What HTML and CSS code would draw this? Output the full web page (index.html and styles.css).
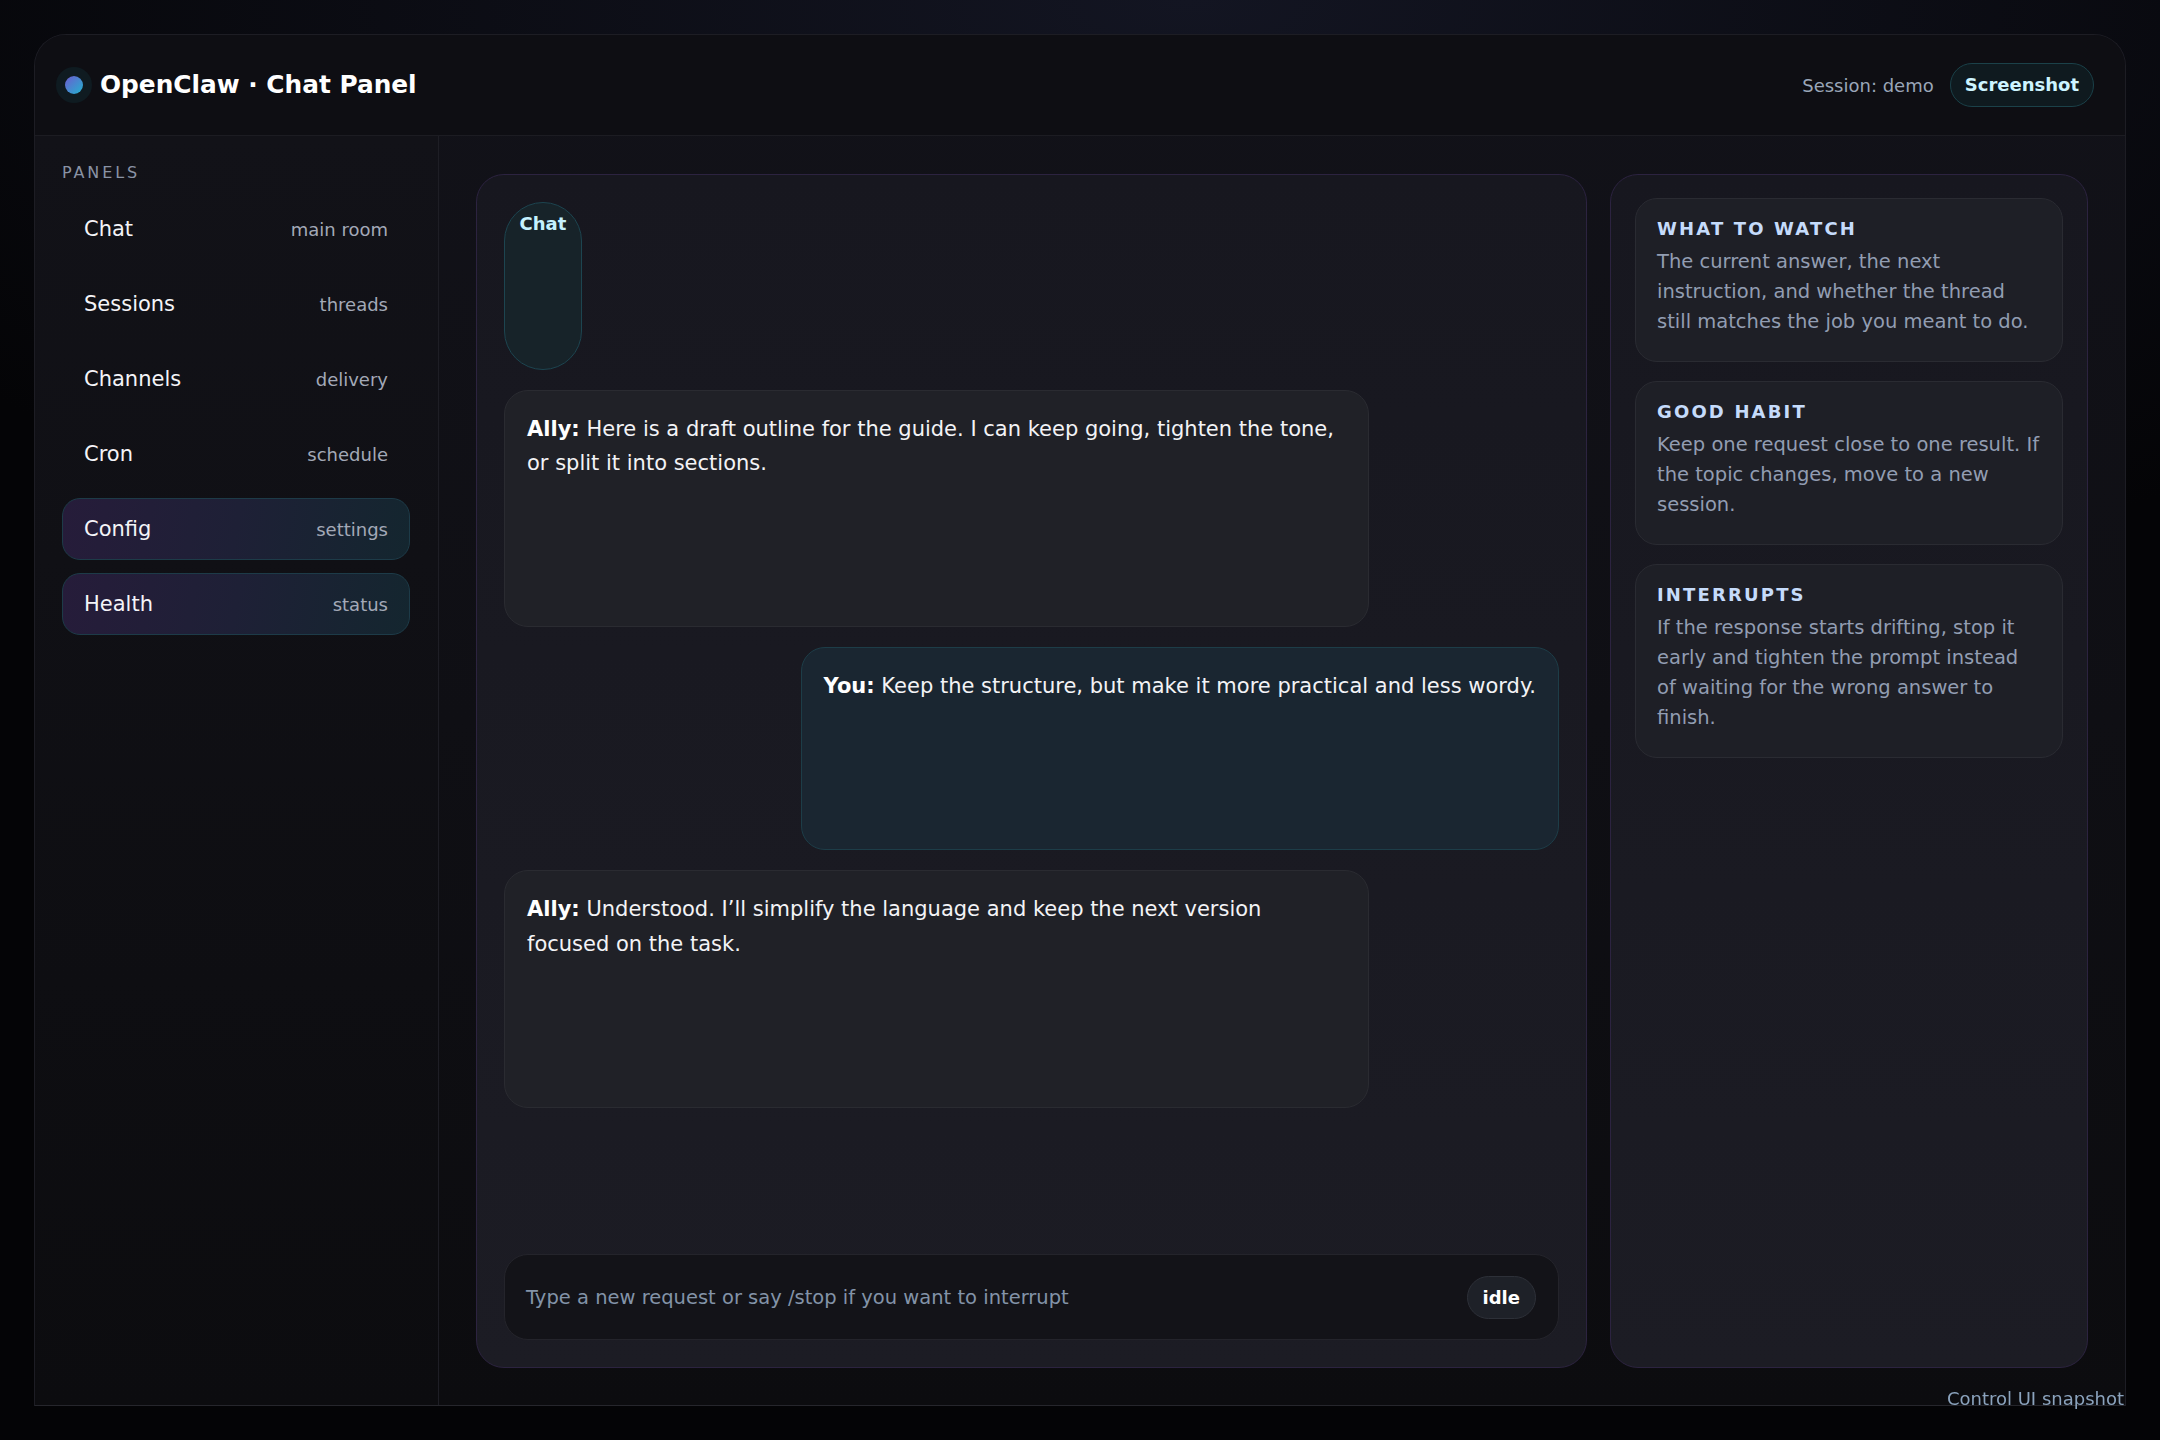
FILE: index.html
```html
<!DOCTYPE html>
<html lang="en">
<head>
<meta charset="utf-8">
<title>OpenClaw · Chat Panel</title>
<link rel="stylesheet" href="styles.css">
</head>
<body>
<div class="app">
  <header class="topbar">
    <div class="brand">
      <span class="logo-dot"></span>
      <h1 class="title">OpenClaw · Chat Panel</h1>
    </div>
    <div class="top-right">
      <span class="session">Session: demo</span>
      <span class="shot-pill">Screenshot</span>
    </div>
  </header>
  <div class="workspace">
    <aside class="sidebar">
      <div class="side-label">PANELS</div>
      <nav class="nav">
        <div class="nav-item"><span class="nav-name">Chat</span><span class="nav-hint">main room</span></div>
        <div class="nav-item"><span class="nav-name">Sessions</span><span class="nav-hint">threads</span></div>
        <div class="nav-item"><span class="nav-name">Channels</span><span class="nav-hint">delivery</span></div>
        <div class="nav-item"><span class="nav-name">Cron</span><span class="nav-hint">schedule</span></div>
        <div class="nav-item active"><span class="nav-name">Config</span><span class="nav-hint">settings</span></div>
        <div class="nav-item active"><span class="nav-name">Health</span><span class="nav-hint">status</span></div>
      </nav>
    </aside>
    <main class="content">
      <section class="chat-panel">
        <div class="messages">
          <div class="tab-pill">Chat</div>
          <div class="msg msg-ally"><strong>Ally:</strong> Here is a draft outline for the guide. I can keep going, tighten the tone, or split it into sections.</div>
          <div class="msg msg-you"><strong>You:</strong> Keep the structure, but make it more practical and less wordy.</div>
          <div class="msg msg-ally"><strong>Ally:</strong> Understood. I’ll simplify the language and keep the next version focused on the task.</div>
        </div>
        <div class="composer">
          <span class="placeholder">Type a new request or say /stop if you want to interrupt</span>
          <span class="idle-pill">idle</span>
        </div>
      </section>
      <aside class="notes">
        <div class="note-card">
          <div class="note-title">WHAT TO WATCH</div>
          <p class="note-text">The current answer, the next instruction, and whether the thread still matches the job you meant to do.</p>
        </div>
        <div class="note-card">
          <div class="note-title">GOOD HABIT</div>
          <p class="note-text">Keep one request close to one result. If the topic changes, move to a new session.</p>
        </div>
        <div class="note-card">
          <div class="note-title">INTERRUPTS</div>
          <p class="note-text">If the response starts drifting, stop it early and tighten the prompt instead of waiting for the wrong answer to finish.</p>
        </div>
      </aside>
    </main>
  </div>
</div>
<div class="caption">Control UI snapshot</div>
</body>
</html>
```
FILE: styles.css
```css
* { box-sizing: border-box; }

html, body {
  margin: 0;
  height: 100%;
}

body {
  padding: 34px;
  font-family: "DejaVu Sans", "Liberation Sans", sans-serif;
  color: #f2f2f6;
  background:
    radial-gradient(ellipse 70% 45% at 55% 0%, #131522 0%, rgba(19,21,34,0) 100%),
    #040406;
  overflow: hidden;
}

.app {
  height: 1372px;
  display: flex;
  flex-direction: column;
  border: 1px solid #1d1d24;
  border-bottom-color: #26262c;
  border-radius: 32px 32px 0 0;
  background: linear-gradient(180deg, #121219 0%, #0c0c0f 100%);
  overflow: hidden;
}

/* ---------- top bar ---------- */
.topbar {
  height: 101px;
  flex: none;
  display: flex;
  align-items: center;
  justify-content: space-between;
  padding: 0 31px 0 30px;
  background: #0e0e13;
  border-bottom: 1px solid #1c1c22;
}

.brand {
  display: flex;
  align-items: center;
  gap: 17px;
}

.logo-dot {
  width: 18px;
  height: 18px;
  border-radius: 50%;
  background: linear-gradient(135deg, #6d5bd0 0%, #22b3cf 100%);
  box-shadow: 0 0 0 9px #0f1b21;
}

.title {
  margin: 0;
  font-size: 24.8px;
  font-weight: 700;
  color: #ffffff;
  line-height: 1.2;
}

.top-right {
  display: flex;
  align-items: center;
  gap: 16px;
}

.session {
  font-size: 18px;
  color: #9aa6b8;
}

.shot-pill {
  padding: 10px 14px;
  line-height: 22px;
  font-size: 18px;
  font-weight: 700;
  color: #cdf4ff;
  background: #0f1a1f;
  border: 1px solid #1b4149;
  border-radius: 999px;
}

/* ---------- workspace ---------- */
.workspace {
  flex: 1;
  display: flex;
  min-height: 0;
}

.sidebar {
  width: 404px;
  flex: none;
  padding: 28px 28px 27px 27px;
  border-right: 1px solid #1e1e25;
  background: linear-gradient(180deg, #121218 0%, #0c0c0f 100%);
}

.side-label {
  font-size: 16px;
  line-height: 18px;
  letter-spacing: 0.18em;
  color: #8a93a5;
  margin-bottom: 16px;
}

.nav {
  display: flex;
  flex-direction: column;
  gap: 13px;
}

.nav-item {
  height: 62px;
  display: flex;
  align-items: center;
  justify-content: space-between;
  padding: 0 21px;
  border: 1px solid transparent;
  border-radius: 18px;
}

.nav-item.active {
  background: linear-gradient(100deg, #261c3a 0%, #1e2036 50%, #14262f 100%);
  border-color: #1d3b48;
}

.nav-name {
  font-size: 21px;
  color: #f4f4f8;
}

.nav-hint {
  font-size: 18px;
  color: #a3a9b7;
}

/* ---------- content ---------- */
.content {
  flex: 1;
  min-width: 0;
  padding: 38px 37px 37px 37px;
  display: grid;
  grid-template-columns: minmax(0, 1fr) 478px;
  gap: 23px;
}

.chat-panel {
  display: flex;
  flex-direction: column;
  padding: 27px;
  border: 1px solid #2c2340;
  border-radius: 28px;
  background: linear-gradient(180deg, #17171f 0%, #1c1c24 100%);
}

.messages {
  height: 906px;
  display: grid;
  gap: 20px;
}

.tab-pill {
  justify-self: start;
  padding: 10px 14.5px;
  line-height: 21px;
  font-size: 18px;
  font-weight: 700;
  color: #c4f1ff;
  background: #172329;
  border: 1px solid #1d4550;
  border-radius: 999px;
}

.msg {
  max-width: 82%;
  padding: 21px 22px;
  font-size: 21px;
  line-height: 34.5px;
  color: #f3f3f6;
  border-radius: 24px;
}

.msg strong { font-weight: 700; color: #ffffff; }

.msg-ally {
  justify-self: start;
  background: #202127;
  border: 1px solid #2a2b31;
}

.msg-you {
  justify-self: end;
  background: #1a2631;
  border: 1px solid #1d3d48;
}

.composer {
  margin-top: auto;
  height: 86px;
  display: flex;
  align-items: center;
  justify-content: space-between;
  padding: 0 22px 0 21px;
  background: #131318;
  border: 1px solid #24242b;
  border-radius: 24px;
}

.placeholder {
  font-size: 19.5px;
  color: #8393a8;
}

.idle-pill {
  padding: 10px 15px;
  line-height: 21px;
  font-size: 18px;
  font-weight: 700;
  color: #ffffff;
  background: #1e2128;
  border: 1px solid #2d3038;
  border-radius: 999px;
}

/* ---------- notes ---------- */
.notes {
  display: flex;
  flex-direction: column;
  gap: 19px;
  padding: 23px 24px;
  border: 1px solid #2c2340;
  border-radius: 28px;
  background: linear-gradient(180deg, #17171f 0%, #1c1c24 100%);
}

.note-card {
  padding: 20px 21px 24px;
  background: #1e1f26;
  border: 1px solid #2a2b32;
  border-radius: 22px;
}

.note-title {
  font-size: 18px;
  line-height: 20px;
  font-weight: 700;
  letter-spacing: 0.12em;
  color: #c5dbfb;
  margin-bottom: 8px;
}

.note-text {
  margin: 0;
  font-size: 19.5px;
  line-height: 30px;
  color: #929db2;
}

/* ---------- caption ---------- */
.caption {
  position: fixed;
  right: 36px;
  bottom: 31px;
  font-size: 18px;
  line-height: 21px;
  color: #8ba3bd;
}
```
